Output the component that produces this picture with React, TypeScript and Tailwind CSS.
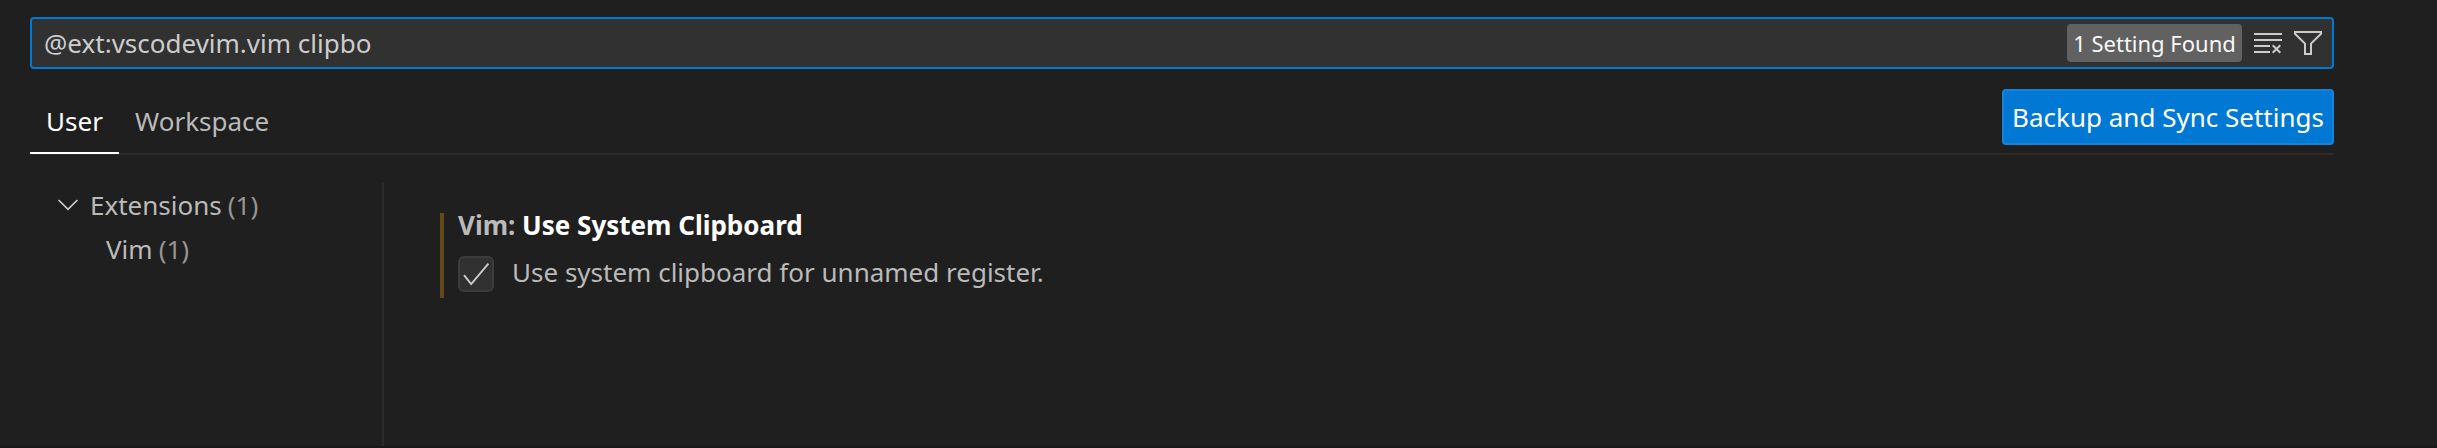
function ClearIcon() {
  return (
    <svg width="32" height="32" viewBox="0 0 32 32" fill="none" stroke="#cccccc" strokeWidth="2" className="shrink-0">
      <path d="M2 7H30M2 13H30M2 19H18M2 25H18" />
      <path d="M20.7 18.2L28.3 25.8M28.3 18.2L20.7 25.8" />
    </svg>
  );
}

function FilterIcon() {
  return (
    <svg width="32" height="32" viewBox="0 0 32 32" fill="none" stroke="#cccccc" strokeWidth="2" className="shrink-0">
      <path d="M3 5H29V6.8L19 16.6V27H13V16.6L3 6.8Z" />
    </svg>
  );
}

function ChevronIcon() {
  return (
    <svg width="32" height="32" viewBox="0 0 32 32" fill="none" stroke="#cccccc" strokeWidth="1.7" className="shrink-0">
      <path d="M6.6 11L16 20.4L25.4 11" />
    </svg>
  );
}

function CheckIcon() {
  return (
    <svg width="32" height="32" viewBox="0 0 32 32" fill="none" stroke="#cccccc" strokeWidth="1.9">
      <path d="M4 17.2L11.2 26L28.4 5.6" />
    </svg>
  );
}

function SearchBar() {
  return (
    <div className="flex h-[52px] items-center rounded-[4px] border-2 border-[#0078d4] bg-[#313131] pr-2 pl-3">
      <span className="flex-1 leading-9 whitespace-pre">@ext:vscodevim.vim clipbo</span>
      <span className="flex h-[38px] w-[175px] items-center justify-center rounded-[4px] bg-[#616161] text-[22px] leading-[30px] whitespace-nowrap text-[#f8f8f8]">
        1 Setting Found
      </span>
      <span className="ml-[10px] flex gap-2">
        <ClearIcon />
        <FilterIcon />
      </span>
    </div>
  );
}

function TabsRow() {
  return (
    <div className="mt-5 flex h-[66px] items-start justify-between border-b-2 border-[#2b2b2b]">
      <div className="flex h-[65px] leading-9">
        <div className="w-[89px] border-b-2 border-white pt-[14px] text-center text-white">User</div>
        <div className="pt-[14px] pl-4 text-[#bababa]">Workspace</div>
      </div>
      <button className="h-14 w-[332px] rounded-[4px] border-2 border-[#1783d8] bg-[#0078d4] leading-9 whitespace-nowrap text-white">
        Backup and Sync Settings
      </button>
    </div>
  );
}

function Tree() {
  return (
    <nav className="w-[354px] border-r-2 border-[#2b2b2b] leading-[44px] text-[#bababa]">
      <div className="flex h-11 items-center pl-[22px]">
        <ChevronIcon />
        <span className="pl-[6px]">Extensions</span>
        <span className="pl-[6px] text-[#959595]">(1)</span>
      </div>
      <div className="flex h-11 items-center pl-[76px]">
        <span>Vim</span>
        <span className="pl-[6px] text-[#959595]">(1)</span>
      </div>
    </nav>
  );
}

function Setting() {
  return (
    <div className="mt-[30px] ml-14 h-[85px] border-l-4 border-[#62491a] pl-[14px] leading-9">
      <div className="-mt-[6px] font-bold text-white">
        <span className="text-[#bababa]">Vim: </span>Use System Clipboard
      </div>
      <div className="mt-[11px] flex items-start">
        <span className="mt-[2px] flex size-9 items-center justify-center rounded-[6px] border-2 border-[#3c3c3c] bg-[#313131]">
          <CheckIcon />
        </span>
        <span className="pl-[18px] text-[#bababa]">Use system clipboard for unnamed register.</span>
      </div>
    </div>
  );
}

export default function App() {
  return (
    <div className="flex h-[448px] w-[2437px] flex-col border-b-2 border-[#1c181a] bg-[#1f1f1f] pt-[17px] pr-[103px] pl-[30px] font-['Noto_Sans',sans-serif] text-[26px] text-[#cccccc]">
      <SearchBar />
      <TabsRow />
      <div className="mt-7 flex flex-1">
        <Tree />
        <Setting />
      </div>
    </div>
  );
}
